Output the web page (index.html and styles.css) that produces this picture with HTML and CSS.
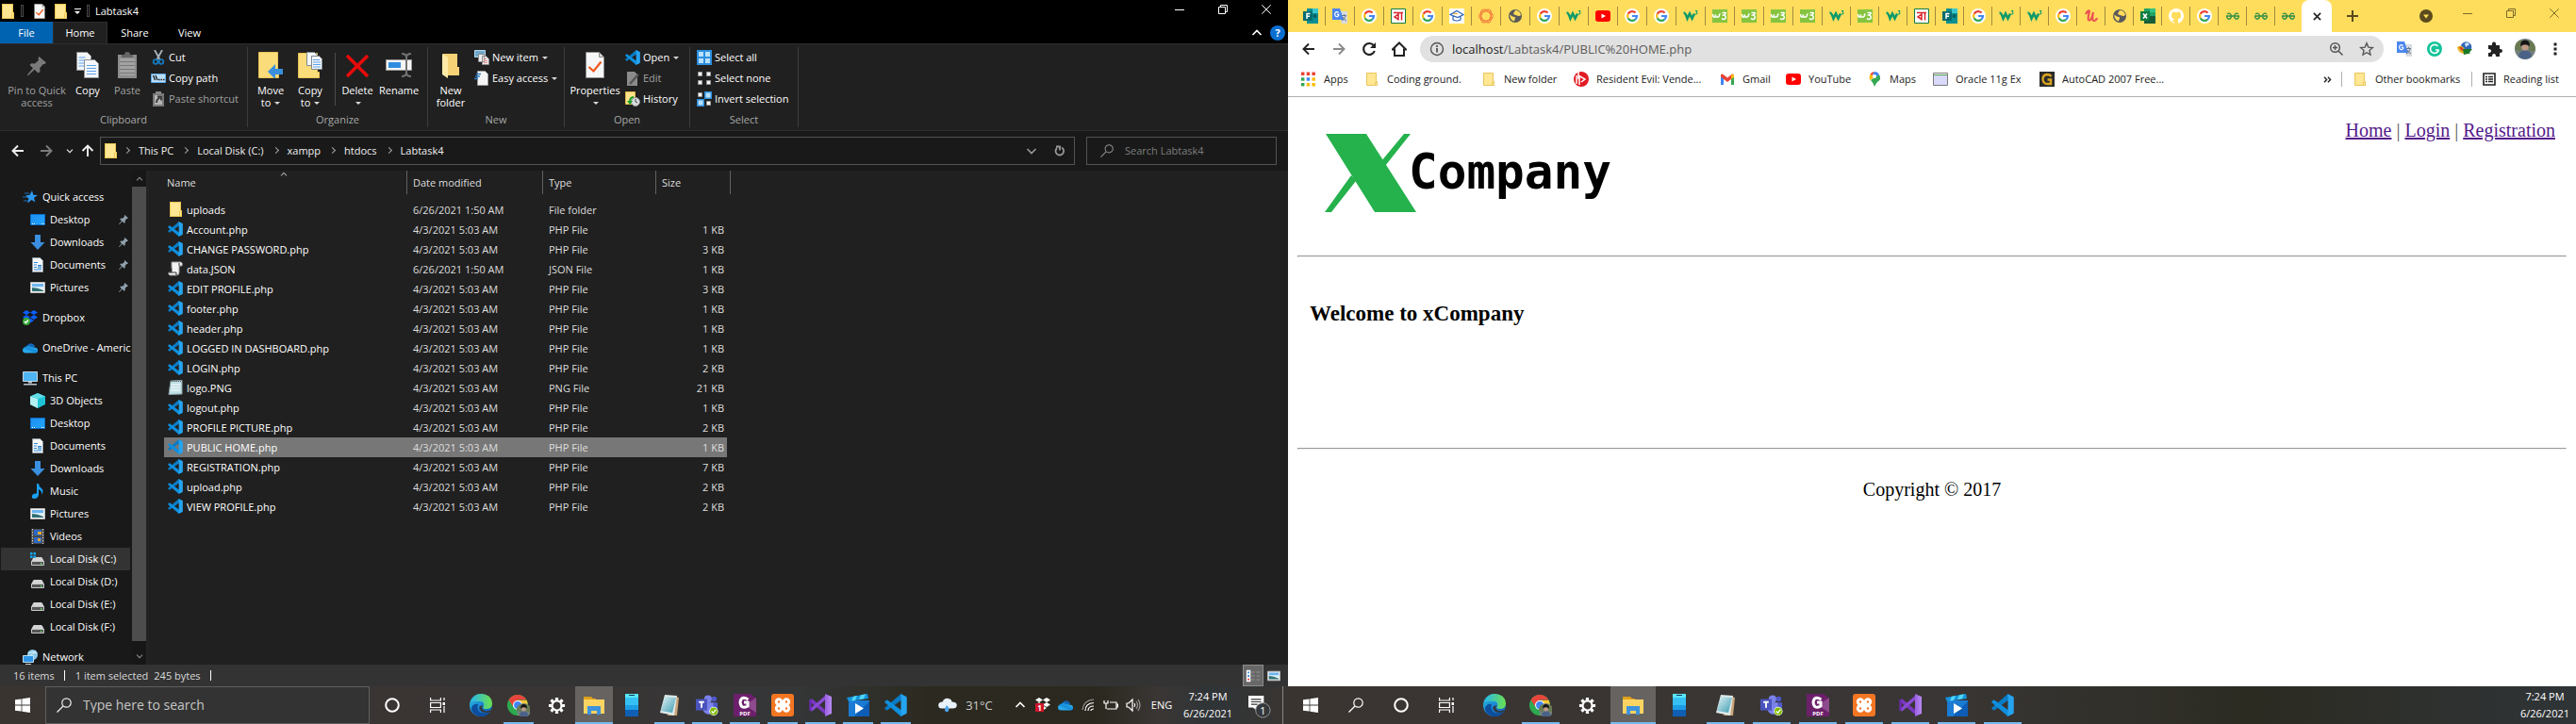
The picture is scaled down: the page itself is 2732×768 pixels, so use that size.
FILE: index.html
```html
<!DOCTYPE html>
<html lang="en">
<head>
<meta charset="utf-8">
<title>Labtask4</title>
<link rel="stylesheet" href="styles.css">
</head>
<body>
<svg class="sprite" aria-hidden="true">
  <defs>
    <linearGradient id="gEdge" x1="0" y1="0" x2="1" y2="1"><stop offset="0" stop-color="#2bc3d2"/><stop offset=".5" stop-color="#1b86d8"/><stop offset="1" stop-color="#0c4fa3"/></linearGradient>
    <linearGradient id="gEdge2" x1="0" y1="0" x2="1" y2="0"><stop offset="0" stop-color="#29b6f0"/><stop offset="1" stop-color="#6be04c"/></linearGradient>
    <linearGradient id="gVs" x1="0" y1="0" x2="1" y2="0"><stop offset="0" stop-color="#9b5fe0"/><stop offset="1" stop-color="#b98bf2"/></linearGradient>
    <linearGradient id="gPad" x1="0" y1="0" x2="1" y2="1"><stop offset="0" stop-color="#e3f2f5"/><stop offset="1" stop-color="#3a9db0"/></linearGradient>
    <linearGradient id="gScreen" x1="0" y1="0" x2="1" y2="1"><stop offset="0" stop-color="#1d8ff0"/><stop offset="1" stop-color="#23a5ff"/></linearGradient>
  </defs>
  <symbol id="folder" viewBox="0 0 16 16"><path fill="#ffe793" d="M2 0h12v9h1v7H2z"/><path fill="none" stroke="#eec54f" d="M2.500 .5h11v9h1v6h-12zM12.500 15V10"/></symbol>
  <symbol id="folderl" viewBox="0 0 16 16"><path fill="#ffe793" stroke="#e8c65b" d="M2.500 1.500h10v9h1v4h-11z"/><path fill="#fff3c0" stroke="#e8c65b" d="M11.500 14.500v-3h2v3z"/></symbol>
  <symbol id="propdoc" viewBox="0 0 20 28"><path fill="#f6f7f8" stroke="#8c8c8c" d="M.5.5h14l5 5v22H.5z"/><path fill="#d9dadb" stroke="#8c8c8c" d="M14.500 .5v5h5z"/><path fill="none" stroke="#f0571c" stroke-width="2.200" d="m3.500 16 5 4.500 8-10"/></symbol>
  <symbol id="code" viewBox="0 0 100 100"><path fill="#0a7bc4" d="M72 1 2 61q-3 3 0 5l6 6q3 2 6 0L96 12z"/><path fill="#0f8fdd" d="M72 99 2 39q-3-3 0-5l6-6q3-2 6 0l82 60z"/><path fill="#25a4f0" d="M73 1 96 12q3 2 3 5v66q0 3-3 5L73 99q-3 1-5-2 4 2 5-3V6q-1-5-5-3 2-3 5-2z"/></symbol>
  <symbol id="pin" viewBox="0 0 20 20"><path fill="currentColor" d="m12.500 0 7.500 6.500-2 1.700-1.300-.2-3.500 4.200.3 3.800-2 1.500-4-3.800L1 20l-1 .2.300-1.200 5.700-6.700L2.500 9 4.200 7.200 8 7.400l4-3.700-.5-2z"/></symbol>
  <symbol id="pages" viewBox="0 0 24 28"><path fill="#f4f6f8" stroke="#8b8f93" d="M.5.5h11l4 4v15H.5z"/><path stroke="#5ea2ee" d="M2.500 6h7M2.500 9h7M2.500 12h7M2.500 15h7"/><path fill="#f4f6f8" stroke="#8b8f93" d="M8.500 8.500h11l4 4v15h-15z"/><path stroke="#5ea2ee" d="M11 14.500h10M11 17.500h10M11 20.500h10M11 23.500h10"/></symbol>
  <symbol id="paste" viewBox="0 0 22 28"><path fill="#8c8c8c" d="M1 3h20v25H1z"/><path fill="#a2a2a2" d="M3 7h16v18H3z"/><path fill="#666" d="M5 6V3h3q0-3 3-3t3 3h3v3z"/><path stroke="#777" d="M3 10.500h16M3 14.500h16M3 18.500h16M3 22.500h16"/></symbol>
  <symbol id="pastes" viewBox="0 0 16 16"><path fill="#777" d="M2 2h12v14H2z"/><path fill="#b5b5b5" d="M4 4h8v10H4z"/><path fill="#888" d="M5 0h6v3H5z"/><path fill="none" stroke="#333" stroke-width="1.800" d="M6 12q0-4 3.500-5M7 5.500h4v4"/></symbol>
  <symbol id="cut" viewBox="0 0 16 16"><path stroke="#a9b4bd" stroke-width="1.800" d="M4 0 9.500 10M12 0 6.500 10"/><g fill="none" stroke="#1877b8" stroke-width="1.800"><circle cx="5" cy="12.500" r="2.300"/><circle cx="11" cy="12.500" r="2.300"/></g></symbol>
  <symbol id="path" viewBox="0 0 16 16"><path fill="#b9def8" stroke="#5aa9e6" d="M.5 3.500h15v9H.5z"/><path stroke="#1c1c1c" stroke-width="1.300" d="m2.500 5 2 5M5 5l2 5M8 9.500h1.500M10.500 9.500H12M13 9.500h1.500"/></symbol>
  <symbol id="moveto" viewBox="0 0 26 28"><path fill="#fbdc7b" stroke="#e9c257" d="M.5.5h20v22h1v5H.5z"/><path fill="#3a8fdd" d="m10 21 8-8v5h8v6h-8v5z"/></symbol>
  <symbol id="copyto" viewBox="0 0 26 28"><path fill="#fbdc7b" stroke="#e9c257" d="M.5 1.500h20v20h2v6H.5z"/><g fill="#f4f6f8" stroke="#7e8891"><path d="M9.500.5h8l3 3v11h-11z"/><path d="M14.500 4.500h8l3 3v11h-11z"/></g><path stroke="#5ea2ee" d="M16 8.500h7M16 11h8M16 13.500h8M16 16h8"/></symbol>
  <symbol id="del" viewBox="0 0 28 28"><path stroke="#e80b0b" stroke-width="3.600" d="m3 4 22 22M25 4 3 26"/></symbol>
  <symbol id="rename" viewBox="0 0 28 28"><path fill="#f5f5f5" stroke="#9a9a9a" d="M.5 8.500h27v11H.5z"/><path fill="#2f8de0" d="M3 11h13v6H3z"/><path fill="none" stroke="#727272" stroke-width="2" d="M17 2q5 0 5 4 0-4 5-4M22 6v16M17 26q5 0 5-4 0 4 5 4"/></symbol>
  <symbol id="newfolder" viewBox="0 0 20 28"><path fill="#f6d277" d="M2 2h15v14h2v9H2z"/><path fill="#ffeaa8" d="m1 2 6 4v22l-6-4z"/></symbol>
  <symbol id="newitem" viewBox="0 0 16 16"><path fill="#6fa7cc" stroke="#b6d9ee" d="M.5.5h11v7H.5z"/><path fill="#eee" stroke="#888" d="M4.500 4.500h6v8h-6zM8.500 6.500h4l3 3v6h-7z"/><path stroke="#d88" d="M10 9.500h3M10 11.500h4M10 13.500h4"/></symbol>
  <symbol id="easy" viewBox="0 0 16 16"><path fill="#f5f5f5" stroke="#999" d="M3.500.5h8l3 3v12h-11z"/><path stroke="#2b7bc4" stroke-width="1.300" d="M2 3.500h5M1 6h5M0 8.500h4"/></symbol>
  <symbol id="edit" viewBox="0 0 16 16"><path fill="#8b8b8b" d="M2 1h8l3 3v12H2z"/><path stroke="#555" stroke-width="2.500" d="m5 14 9-10"/></symbol>
  <symbol id="hist" viewBox="0 0 16 16"><path fill="#ffe28a" stroke="#e1b74a" d="M.5.5h10v13H.5z"/><circle cx="11" cy="11" r="4.500" fill="#d9dde0" stroke="#8a8a8a"/><path fill="none" stroke="#444" d="M11 8v3l2 1"/><path fill="none" stroke="#17a02b" stroke-width="2" d="M9 6q-4 0-4 5"/><path fill="#17a02b" d="M2 10h6l-3 4z"/></symbol>
  <symbol id="selall" viewBox="0 0 16 16"><path fill="#2b8fe0" d="M0 0h16v16H0z"/><path fill="#b9e0fa" d="M2 2h5v5H2zM9 2h5v5H9zM2 9h5v5H2zM9 9h5v5H9z"/></symbol>
  <symbol id="selnone" viewBox="0 0 16 16"><g fill="#f5f5f5" stroke="#999"><path d="M1.500 1.500h4v4h-4zM10.500 1.500h4v4h-4zM1.500 10.500h4v4h-4zM10.500 10.500h4v4h-4z"/></g></symbol>
  <symbol id="selinv" viewBox="0 0 16 16"><path fill="#b9e0fa" stroke="#2b8fe0" stroke-width="1.500" d="M8.800.8h6.500v6.500H8.800zM.8 8.800h6.500v6.500H.8z"/><path fill="#f5f5f5" stroke="#999" d="M1.500 1.500h4v4h-4zM10.500 10.500h4v4h-4z"/></symbol>
  <symbol id="star" viewBox="0 0 16 16"><path fill="#2b9af0" d="m10 1 1.300 4.700 4.700.3-4 2.700 1.300 4.900L9.500 11l-4.300 3.500 1.300-4.700L3 6.500l4.600-.8z"/><path stroke="#1f6fb8" d="M2 4h5M0 8h5M1 12h5"/></symbol>
  <symbol id="desk" viewBox="0 0 16 16"><path fill="url(#gScreen)" stroke="#0b6fc8" d="M.5 2.500h15v11H.5z"/><path stroke="#fff" stroke-dasharray="1 1" d="M2 12.500h3M12 12.500h3"/></symbol>
  <symbol id="down" viewBox="0 0 16 16"><path fill="#3a8fe0" d="M5 0h6v8h4.500L8 16 .5 8H5z"/></symbol>
  <symbol id="doc" viewBox="0 0 16 16"><path fill="#f5f7f9" stroke="#8f979e" d="M2.500.5h8l3 3v12h-11z"/><path stroke="#2b88d8" d="M4 5.500h4M4 8h3M4 10.500h3M4 13h8M8 8.500h4"/><path fill="#7fb4dc" d="M8 9h4v3H8z"/></symbol>
  <symbol id="pic" viewBox="0 0 16 16"><path fill="#f2f2f2" stroke="#b9b9b9" d="M.5 2.500h15v11H.5z"/><path fill="#6db4ee" d="M2 4h12v4H2z"/><path fill="#d7edf7" d="M2 7h12v2H2z"/><path fill="#2f6f73" d="M2 8q5 0 12 3v1H2z"/></symbol>
  <symbol id="dbox" viewBox="0 0 16 16"><path fill="currentColor" d="m4 0 4 2.500L4 5 0 2.500zM12 0l4 2.500L12 5 8 2.500zM4 5l4 2.500L4 10 0 7.500zM12 5l4 2.500-4 2.500-4-2.500zM8 8.500l4 2.500-4 2.500L4 11z"/></symbol>
  <symbol id="dboxok" viewBox="0 0 16 16"><use href="#dbox" color="#0b5fff"/><circle cx="4" cy="12" r="4" fill="#3aa83a"/><path fill="none" stroke="#fff" stroke-width="1.400" d="m2 12 1.500 1.500L6 10.500"/></symbol>
  <symbol id="cloud" viewBox="0 0 16 16"><path fill="#1267b8" d="M5 5q2.500-3 6-1 2 1 2 3L4 9z"/><path fill="#28a8ea" d="M3.500 13.500q-3.500 0-3.500-3T3.500 7q2-2 5 0l3.500.5q4 0 4 3t-3 3z"/><path fill="#0f83d6" d="M1 8.500Q2 5.500 5 6q2 0 3.500 1.500L16 11q0 2.500-3 2.500z" opacity=".6"/></symbol>
  <symbol id="pc" viewBox="0 0 16 16"><path fill="#4fb4f2" stroke="#c6d4de" d="M.5 1.500h15v10H.5z"/><path fill="#b9c4cc" d="M6 12h4v1.500H6zM1 14h14v1.500H1z"/></symbol>
  <symbol id="cube" viewBox="0 0 16 16"><path fill="#1fc3d6" d="m8 0 8 3.500V12l-8 4-8-4V3.500z"/><path fill="#b4eff2" d="M0 3.500 8 6v10l-8-4z"/><path fill="#63dce6" d="m8 0 8 3.500L8 6 0 3.500z"/></symbol>
  <symbol id="note" viewBox="0 0 16 16"><path fill="#19a0f5" d="M7 0h2q0 3 3 5t0 7q1-4-3-6v6q-1 4-4.500 4T2 13q.5-3 5-2.500z"/></symbol>
  <symbol id="film" viewBox="0 0 16 16"><path fill="#4a4a4a" d="M1 0h14v16H1z"/><path stroke="#d0d0d0" stroke-dasharray="1.500 1.500" d="M2.500 0v16M13.500 0v16"/><path fill="#2a69c8" d="M4 1h8v6H4zM4 9h8v6H4z"/><path fill="#e6a52a" d="M8 3h4v3H8zM8 10h3v3H8z"/></symbol>
  <symbol id="disk" viewBox="0 0 16 16"><path fill="#d4d4d4" d="m3 7 1-1h8l1 1 2 4H1z"/><path fill="#555" stroke="#c9c9c9" d="M1.500 10.500h13v4h-13z"/><path fill="#5de05d" d="M11 12h1.500v1.500H11z"/></symbol>
  <symbol id="diskc" viewBox="0 0 16 16"><use href="#disk"/><path fill="#17a6f0" d="M0 1h2.500v2.500H0zM3.500 1H6v2.500H3.500zM0 4.500h2.500V7H0zM3.500 4.500H6V7H3.500z"/></symbol>
  <symbol id="net" viewBox="0 0 16 16"><circle cx="10.500" cy="5.500" r="5.500" fill="#8cc9e8"/><path fill="none" stroke="#e2f4fb" d="M6 4q5-3 9 0M7 8q4-4 7-7"/><path fill="#2f95e6" stroke="#bcdff5" d="M.5 6.500h11v7H.5z"/><path fill="#c5cdd3" d="M3 15h6v1H3z"/></symbol>
  <symbol id="json" viewBox="0 0 16 16"><path fill="#f2f2f2" stroke="#9a9a9a" d="M4 1h10q2 1 1 4h-3v7q0 3-3 3H2q-2-1-1-3h3q1-1 0-6z"/><path fill="none" stroke="#333" d="M12 5V2M1.500 12H9v3"/></symbol>
  <symbol id="png" viewBox="0 0 16 16"><path fill="#bfe0e6" stroke="#88a0a6" d="m3 1 12-.5V15l-14 .5z"/><path stroke="#fff" d="M3.500 5h10M3 8h10M3 11h10"/><path stroke="#555" stroke-dasharray="1 1" d="M3 1.500h12"/></symbol>
  <symbol id="win" viewBox="0 0 16 16"><path fill="#fff" d="m0 2.300 6.600-.9v6.200H0zM7.400 1.300 16 0v7.600H7.400zM0 8.400h6.600v6.200L0 13.700zM7.400 8.400H16V16l-8.600-1.300z"/></symbol>
  <symbol id="mag" viewBox="0 0 16 16"><g fill="none" stroke="currentColor" stroke-width="1.200"><circle cx="10.500" cy="5.500" r="4.700"/><path d="M7 9 .5 15.500"/></g></symbol>
  <symbol id="ring" viewBox="0 0 16 16"><circle cx="8" cy="8" r="6.800" fill="none" stroke="#fff" stroke-width="2"/></symbol>
  <symbol id="tview" viewBox="0 0 16 16"><g fill="none" stroke="#fff" stroke-width="1.200"><path d="M.6 0v3h10.800V0M.6 16v-3h10.800v3M.6 5.500h10.800v5H.6zM15 0v3M15 9v7"/></g><path fill="#fff" d="M13.500 5h3v3h-3z"/></symbol>
  <symbol id="edge" viewBox="0 0 24 24"><circle cx="12" cy="12" r="12" fill="url(#gEdge)"/><path fill="url(#gEdge2)" d="M1 9Q4 0 12 0q11 0 12 10 0 6-6 6-5 0-3-3 1-5-4-5Q5 7 1 9z"/><path fill="#0d4d9c" d="M9 11q-2 6 3 9 5 2 10-1-5 6-12 5-8-3-8-9 2-5 7-4z"/><path fill="#35383c" d="M15 12q-4 3 1 6 3 1 7-1l-1 2q-5 2-9 0-4-3-2-6z"/></symbol>
  <symbol id="face" viewBox="0 0 16 16"><circle cx="8" cy="8" r="8" fill="#74807e"/><path fill="#6a7a52" d="M0 8Q0 2 5 1v9zM11 1q5 2 5 8l-5 1z"/><path fill="#4a6288" d="M3 14q0-5 5-5t5 5q-5 4-10 0z"/><circle cx="8" cy="6.500" r="2.600" fill="#c09a85"/><path fill="#151515" d="M4.500 6Q4 1 8 1t3.500 5q-3.500-3-7 0z"/></symbol>
  <symbol id="chrome" viewBox="0 0 24 24"><circle cx="11" cy="12" r="11" fill="#2da94f"/><path fill="#e8453c" d="M1.500 6.500Q5 1 11 1t9.500 5.500H11L6 13z"/><path fill="#fcc934" d="M11 7h9.800q3 8-3.800 14l-6 2 5-8z"/><circle cx="11" cy="12" r="5" fill="#fff"/><circle cx="11" cy="12" r="3.900" fill="#4285f4"/><use href="#face" x="10" y="10" width="15" height="15"/></symbol>
  <symbol id="gear" viewBox="0 0 20 20"><circle cx="10" cy="10" r="5.300" fill="none" stroke="#fff" stroke-width="2.400"/><g stroke="#fff" stroke-width="3.400"><path d="M10 1v3M10 16v3M1 10h3M16 10h3M3.600 3.600l2.100 2.100M14.300 14.300l2.100 2.100M16.400 3.600l-2.100 2.100M5.700 14.300l-2.100 2.100"/></g></symbol>
  <symbol id="explorer" viewBox="0 0 24 24"><path fill="#e0a21b" d="M1 3h8l2 2h3v3H1z"/><path fill="#fcd462" d="M1 6h22v15H1z"/><path fill="#3f93dc" d="M5 22v-9h14v9h-4v-4H9v4z"/></symbol>
  <symbol id="phone" viewBox="0 0 24 24"><path fill="#35c1f3" d="M5 0h14v24H5z"/><path fill="#0f5fb5" d="M5 17h14v7H5z"/><path fill="#1d9de5" d="M5 12h14v5H5z"/><path fill="#59e5f7" d="M5 0h14v4H5z"/><path stroke="#143a5a" d="M9 1.500h6"/></symbol>
  <symbol id="notepad" viewBox="0 0 24 24"><path fill="#c9a679" d="m18 3 4 1-2 19H10z"/><path fill="#dfe9eb" d="m7 1 13 1-3 21-15-3z"/><path fill="url(#gPad)" d="m7 3 12 1-4 16-12-2z"/></symbol>
  <symbol id="teams" viewBox="0 0 26 24"><circle cx="14" cy="5" r="4.500" fill="#7b83eb"/><circle cx="21" cy="5" r="3" fill="#5059c9"/><path fill="#5059c9" d="M17 9h8v7q-1 5-8 4z"/><path fill="#7b83eb" d="M8 9h12v9q-3 6-8 4-4-2-4-7z"/><path fill="#4b53bc" d="M0 5h13v13H0z"/><path stroke="#fff" stroke-width="2" d="M3.500 8.500h6M6.500 8v7"/><circle cx="20.500" cy="19" r="5" fill="#fff"/><circle cx="20.500" cy="19" r="4.200" fill="#7fba00"/><path fill="none" stroke="#fff" stroke-width="1.500" d="m18 19 2 2 3-4"/></symbol>
  <symbol id="foxit" viewBox="0 0 24 24"><path fill="#6c1f6b" d="M0 0h18l6 5v19H0z"/><path fill="#8d4a8c" d="m12 12 12-8v16z"/><path fill="none" stroke="#fff" stroke-width="3" d="M15.500 6Q8 1.500 7 9q1 8 8 4V9h-4"/><text x="12" y="23" fill="#fff" font-family="Open Sans,sans-serif" font-size="6" font-weight="700" text-anchor="middle">PDF</text></symbol>
  <symbol id="xampp" viewBox="0 0 24 24"><rect width="24" height="24" rx="3" fill="#f37623"/><g fill="none" stroke="#fff" stroke-width="3"><path d="M12 8.500v7M9 12h6"/><circle cx="8" cy="8.500" r="2.700"/><circle cx="16" cy="8.500" r="2.700"/><circle cx="8" cy="15.500" r="2.700"/><circle cx="16" cy="15.500" r="2.700"/></g></symbol>
  <symbol id="vs" viewBox="0 0 24 24"><path fill="none" stroke="#7a38c2" stroke-width="3.600" d="m1.800 6.500 16 13.500"/><path fill="none" stroke="#8a4bd3" stroke-width="3.600" d="M1.800 17.500 18 3.500"/><path stroke="#6a2bb0" stroke-width="2.500" d="M1.500 6v12"/><path fill="url(#gVs)" d="m17 0 7 3v18l-7 3z"/></symbol>
  <symbol id="movies" viewBox="0 0 24 24"><path fill="#1a7bd4" d="M2 7h22v17H2z"/><path fill="#0d5cb5" d="m24 8v16H8z"/><path fill="#1494dd" d="m0 4 22-4 1 5L2 8z"/><path fill="#4fd6f7" d="m7 2.800 4-.8-2 5-4 .4zM15 1.300l5-1-2 5-5 1z"/><path fill="#fff" d="m9 10 9 5.500L9 21z"/></symbol>
  <symbol id="rain" viewBox="0 0 22 18"><path fill="#e9f2fa" d="M4 13q-4 0-4-4t5-4q2-5 7-4 4 1 4 4 6 0 6 4t-5 4z"/><path fill="#4aa6ee" d="M10 9q4 4 2 7-2 2-4 0-1-3 2-7z"/></symbol>
  <symbol id="wifi" viewBox="0 0 14 14"><g fill="none" stroke="#fff" stroke-width="1.200"><path d="M1 12Q2 2 13 1" opacity=".55"/><path d="M4 13Q4 5 13 4.500M7 13q0-5 6-5M10 13q0-2 3-2"/></g></symbol>
  <symbol id="batt" viewBox="0 0 16 12"><path fill="none" stroke="#fff" stroke-width="1.200" d="M7 3h7v7H4M14 5h1.500v3H14M1 1v3h4V1M3 4v6"/></symbol>
  <symbol id="sound" viewBox="0 0 16 14"><path fill="none" stroke="#fff" stroke-width="1.200" d="M1 5h2l4-4v12L3 9H1zM9 5q1.500 2 0 4"/><path fill="none" stroke="#999" stroke-width="1.200" d="M11 3q3 4 0 8M13 1q4 6 0 12"/></symbol>
  <symbol id="notif" viewBox="0 0 26 26"><path fill="#fff" d="M0 0h17v13h-8v3l-4-3H0z"/><path stroke="#333" stroke-width="1.200" d="M3 4h11M3 6.800h11M3 9.500h7"/><circle cx="16" cy="16" r="8" fill="#34383b" stroke="#999"/><text x="16" y="20.500" fill="#fff" font-family="Open Sans,sans-serif" font-size="12" text-anchor="middle">1</text></symbol>
  <symbol id="chev" viewBox="0 0 12 12"><path fill="none" stroke="currentColor" stroke-width="1.600" d="m1.500 4 4.500 4.500L10.500 4"/></symbol>
  <symbol id="arrow" viewBox="0 0 14 14"><path fill="none" stroke="currentColor" stroke-width="1.900" d="M13 7H1.500M7 1.500 1.500 7 7 12.500"/></symbol>
  <symbol id="close" viewBox="0 0 10 10"><path stroke="currentColor" d="m.3.3 9.400 9.400M9.700.3.300 9.700"/></symbol>
  <symbol id="restore" viewBox="0 0 10 10"><path fill="none" stroke="currentColor" d="M.5 2.500h7v7h-7zM2.500 2V.5h7v7H8"/></symbol>
  <symbol id="min" viewBox="0 0 10 10"><path stroke="currentColor" d="M0 5.500h10"/></symbol>
  <symbol id="refresh" viewBox="0 0 12 12"><path fill="none" stroke="currentColor" stroke-width="1.800" d="M3 3a4.300 4.300 0 1 0 5-.5M2 1.500h4v4"/></symbol>
  <symbol id="forms" viewBox="0 0 16 16"><path fill="#0a8f93" d="M4 0h12v16H4z"/><path fill="#38c6cb" d="M10 0h6v5h-6zM4 5h6v5H4z"/><circle cx="12.500" cy="8" r="2" fill="#065e60"/><path fill="#036c70" d="M0 3h10v10H0z"/><path stroke="#fff" stroke-width="1.500" fill="none" d="M4 11V5.500h3.500M4 8.200h3"/></symbol>
  <symbol id="trans" viewBox="0 0 16 16"><path fill="#d8dbe0" d="M6 3h10v13h-6z"/><path fill="#4a86ee" d="M0 0h8l4 12H0z"/><path fill="none" stroke="#fff" stroke-width="1.200" d="M6.500 4.500Q5 3 3.300 4.200 1.800 6 3.300 8q2 1.500 3.400-.5V6.300H5"/><path fill="none" stroke="#66788c" d="M10 7.500h5M12.500 6v1.500M14 8q-1 4-4 5M11 9q1 3 4 4"/></symbol>
  <symbol id="goog" viewBox="0 0 16 16"><circle cx="8" cy="8" r="8" fill="#fff"/><g fill="none" stroke-width="2.200"><path stroke="#ea4335" d="M11.600 4.600A5 5 0 0 0 3.600 5.700"/><path stroke="#fbbc05" d="M3.600 5.700a5 5 0 0 0 0 4.600"/><path stroke="#34a853" d="M3.600 10.300a5 5 0 0 0 7.700 1.400"/><path stroke="#4285f4" d="M11.300 11.700A5 5 0 0 0 13 8H8"/></g></symbol>
  <symbol id="bangla" viewBox="0 0 16 16"><path fill="#fff" stroke="#0f7a45" d="M.5.5h15v15H.5z"/><path fill="none" stroke="#d8232a" stroke-width="1.500" d="M3 4.500h10M8 4.500v8M8 11.500 4 9l4-3M11.500 4.500v8"/></symbol>
  <symbol id="cap" viewBox="0 0 16 16"><path fill="#fff" d="M0 0h16v16H0z"/><path fill="none" stroke="#2a63b8" stroke-width="1.200" d="m1 6.500 7-4 7 4-6 3zM4 8v4q4 2 8 0V8"/><path stroke="#e6a93a" stroke-width="1.200" d="M4 5.500h5"/></symbol>
  <symbol id="flower" viewBox="0 0 16 16"><g fill="none" stroke="#f0793c"><ellipse cx="8" cy="8" rx="7.500" ry="5"/><ellipse cx="8" cy="8" rx="7.500" ry="5" transform="rotate(60 8 8)"/><ellipse cx="8" cy="8" rx="7.500" ry="5" transform="rotate(120 8 8)"/></g></symbol>
  <symbol id="globe" viewBox="0 0 16 16"><circle cx="8" cy="8" r="7" fill="#5a5a5a"/><path fill="#ffdd5c" d="M2 7q2 0 3 1.500 3 0 3 1.500l-1 3.500q-4-1-5-6.500zM8 2q5 0 6 5-2 1.500-4 .5L7 6.500l-1-1z"/></symbol>
  <symbol id="w3" viewBox="0 0 16 16"><path fill="none" stroke="#0b9a6b" stroke-width="2.600" d="M.5 4.500q2 0 4 6L7 5.500l2.500 5 2.500-5"/><path fill="none" stroke="#0b9a6b" d="M13 2.500h2l-1 1.500q2 .3.500 2L13 6"/></symbol>
  <symbol id="w3g" viewBox="0 0 16 16"><path fill="#86c440" d="M0 1h16v14H0z"/><path fill="none" stroke="#fff" stroke-width="1.500" d="M.7 6v2q1 2 2.300 1L3.500 6.500V8q1 2 2.500 1 1.500-.5 1.500-2.500L8.500 5.500M10.500 4.500H14q1 1-2 2.500 3 .5 2 3.500-2 2-4 0"/></symbol>
  <symbol id="yt" viewBox="0 0 16 16"><rect y="2" width="16" height="12" rx="3" fill="#f00"/><path fill="#fff" d="m6.500 5.500 4.500 2.500-4.500 2.500z"/></symbol>
  <symbol id="udemy" viewBox="0 0 16 16"><path fill="none" stroke="#ec5252" stroke-width="2.200" d="M2 6q3-5 4-3-2 8-1 9 3 2 5-8-2 9 1 9 2 0 3-3"/></symbol>
  <symbol id="excel" viewBox="0 0 16 16"><path fill="#21a366" d="M4 0h12v16H4z"/><path fill="#33c481" d="M10 0h6v4h-6z"/><path fill="#185c37" d="M10 8h6v8H4v-4h6z"/><path fill="#107c41" d="M0 3h10v10H0z"/><path stroke="#fff" stroke-width="1.600" d="m3 5.500 4 5M7 5.500l-4 5"/></symbol>
  <symbol id="github" viewBox="0 0 16 16"><circle cx="8" cy="8" r="8" fill="#fff"/><path fill="#ffdd5c" d="m4 3 2 1h4l2-1 .5 2.500Q14 9 11.500 10.500l-1.500.5V16H6v-2q-2 1-3-1 2 .5 3-2l-1.500-.5Q2 9 3.500 5.500z"/></symbol>
  <symbol id="gfg" viewBox="0 0 16 16"><path fill="none" stroke="#2f8d46" stroke-width="1.300" d="M1 8h14M2 6q2.500-2 4 .5t-1 4.500H3q-1.500-1-1.500-3M14 6q-2.500-2-4 .5t1 4.500H13q1.500-1 1.500-3"/></symbol>
  <symbol id="apps" viewBox="0 0 14 14"><g stroke-width="3" stroke-dasharray="3 2"><path stroke="#ea4335" d="M0 2h13"/><path stroke="#34a853" d="M0 7h3"/><path stroke="#4285f4" d="M5 7h3"/><path stroke="#fbbc05" d="M10 7h3"/><path stroke="#34a853" d="M0 12h3"/><path stroke="#fbbc05" d="M5 12h8"/></g></symbol>
  <symbol id="bbc" viewBox="0 0 16 16"><circle cx="8" cy="8" r="8" fill="#e21b23"/><path fill="none" stroke="#fff" stroke-width="1.500" d="M5 0v8M6 14V4.500l6 3.500-4 3M3 4v9"/></symbol>
  <symbol id="gmail" viewBox="0 0 16 16"><path fill="#4285f4" d="M1 4h3v10H1z"/><path fill="#34a853" d="M12 4h3v10h-3z"/><path fill="#ea4335" d="m1 3 2-.5L8 6.500l5-4 2 .5v2.500L8 11 1 5.500z"/><path fill="#fbbc05" d="m12 3.500 3-.5v3l-3 2z"/></symbol>
  <symbol id="maps" viewBox="0 0 16 16"><path fill="#34a853" d="M8 16q-1-4-4-7l9-6q3 5-2 8-2 2-3 5z"/><path fill="#ea4335" d="M3.500 2.500Q5 0 8 0L5 5z"/><path fill="#4285f4" d="M8 0q3.500 0 5 3L9 6 6 3z"/><path fill="#fbbc05" d="M3 9q-1-3 .5-6.500L8 6z"/><circle cx="8" cy="5" r="2" fill="#fff"/></symbol>
  <symbol id="oracle" viewBox="0 0 16 16"><path fill="#d9d9fb" stroke="#7b7b7b" d="M.5 1.500h15v13H.5z"/><path fill="#fff" d="M1 2h14v2H1z"/><path stroke="#4b9c4b" d="M1 3.500h14"/></symbol>
  <symbol id="gold" viewBox="0 0 16 16"><path fill="#2b2b2b" d="M0 0h16v16H0z"/><path fill="none" stroke="#d9a520" stroke-width="2.400" d="M12.500 5Q11 3 8 3 3.500 3.500 3.500 8q.5 5 5 5h3.500V8.500H8.500"/></symbol>
  <symbol id="read" viewBox="0 0 14 14"><path fill="none" stroke="#222" stroke-width="1.600" d="M1 1h12v12H1z"/><path stroke="#222" stroke-width="1.500" d="M3 4.500h2M6 4.500h5M3 7h2M6 7h5M3 9.500h2M6 9.500h5"/></symbol>
  <symbol id="reload" viewBox="0 0 16 16"><path fill="none" stroke="#222" stroke-width="2.200" d="M13 4.500A6 6 0 1 0 13.800 10"/><path fill="#222" d="M15 1v6H9z"/></symbol>
  <symbol id="home" viewBox="0 0 16 16"><path fill="none" stroke="#222" stroke-width="2" d="M.8 8.500 8 1.500l7.200 7H13V15H3V8.500z"/></symbol>
  <symbol id="info" viewBox="0 0 16 16"><circle cx="8" cy="8" r="6.500" fill="none" stroke="#555" stroke-width="1.400"/><path stroke="#555" stroke-width="1.800" d="M8 7v4.500M8 4v2"/></symbol>
  <symbol id="zoomin" viewBox="0 0 16 16"><g fill="none" stroke="#555" stroke-width="1.500"><circle cx="6.500" cy="6.500" r="4.800"/><path d="m10 10 4.500 4.500M4 6.500h5M6.500 4v5"/></g></symbol>
  <symbol id="fav" viewBox="0 0 16 16"><path fill="none" stroke="#555" stroke-width="1.400" d="m8 1.800 1.800 4.300 4.700.4-3.500 3.100 1 4.500-4-2.400-4 2.400 1-4.500L1.500 6.500l4.700-.4z"/></symbol>
  <symbol id="gram" viewBox="0 0 16 16"><circle cx="8" cy="8" r="8" fill="#15c39a"/><path fill="none" stroke="#fff" stroke-width="1.600" d="M11.500 5A4.500 4.500 0 1 0 12 10V9H9"/></symbol>
  <symbol id="idm" viewBox="0 0 16 16"><circle cx="9.500" cy="6" r="5.800" fill="#3167b8"/><path fill="#cfe2f5" d="M8 2q4-2 5 1l-4 3z"/><path fill="#e8b320" d="M0 6q5-4 9 4l-2 3Q1 12 0 6z"/><path fill="#d13a2a" d="M2 6q3-1 5 3l-2 1z"/><path fill="#1a7a24" d="m6 8 10 0-3 3.500 1 1-7 1.500z"/></symbol>
  <symbol id="puzzle" viewBox="0 0 16 16"><path fill="#222" d="M1 4h4q-.5-3.500 2-3.500T9 4h4v4q3-.5 3 2t-3 2v4H9q0-3-2-3t-2 3H1v-4q3 0 3-2t-3-2z"/></symbol>
</svg>

<main class="screen">
  <section class="explorer">
    <div class="app dark">
      <header class="titlebar">
        <svg class="i16"><use href="#folder"/></svg><i class="qsep"></i>
        <svg class="i16"><use href="#propdoc"/></svg><svg class="i16"><use href="#folder"/></svg>
        <span class="qmore"></span><i class="qsep"></i>
        <h1>Labtask4</h1>
        <div class="winbtns">
          <button aria-label="Minimize"><svg><use href="#min"/></svg></button>
          <button aria-label="Restore"><svg><use href="#restore"/></svg></button>
          <button aria-label="Close"><svg><use href="#close"/></svg></button>
        </div>
      </header>
      <nav class="tabs">
        <button class="file">File</button><button class="on">Home</button><button>Share</button><button>View</button>
        <span class="tabend"><svg class="i12 flip"><use href="#chev"/></svg><button class="help" aria-label="Help">?</button></span>
      </nav>
      <div class="ribbon">
        <div class="group clip">
          <div class="tools">
            <button class="big w66 off"><svg class="pinbig"><use href="#pin"/></svg>Pin to Quick<br>access</button>
            <button class="big w42"><svg><use href="#pages"/></svg>Copy</button>
            <button class="big w42 off"><svg><use href="#paste"/></svg>Paste</button>
            <div class="small">
              <button><svg><use href="#cut"/></svg>Cut</button>
              <button><svg><use href="#path"/></svg>Copy path</button>
              <button class="off"><svg><use href="#pastes"/></svg>Paste shortcut</button>
            </div>
          </div>
          <p>Clipboard</p>
        </div>
        <div class="group org">
          <div class="tools">
            <button class="big w42"><svg><use href="#moveto"/></svg>Move<br>to <i class="tri"></i></button>
            <button class="big w42"><svg><use href="#copyto"/></svg>Copy<br>to <i class="tri"></i></button>
            <i class="vline"></i>
            <button class="big w46"><svg><use href="#del"/></svg>Delete<br><i class="tri"></i></button>
            <button class="big w42"><svg><use href="#rename"/></svg>Rename</button>
          </div>
          <p>Organize</p>
        </div>
        <div class="group new">
          <div class="tools">
            <button class="big w42"><svg><use href="#newfolder"/></svg>New<br>folder</button>
            <div class="small">
              <button><svg><use href="#newitem"/></svg>New item <i class="tri"></i></button>
              <button><svg><use href="#easy"/></svg>Easy access <i class="tri"></i></button>
            </div>
          </div>
          <p>New</p>
        </div>
        <div class="group open">
          <div class="tools">
            <button class="big w56"><svg><use href="#propdoc"/></svg>Properties<br><i class="tri"></i></button>
            <div class="small">
              <button><svg><use href="#code"/></svg>Open <i class="tri"></i></button>
              <button class="off"><svg><use href="#edit"/></svg>Edit</button>
              <button><svg><use href="#hist"/></svg>History</button>
            </div>
          </div>
          <p>Open</p>
        </div>
        <div class="group sel">
          <div class="tools">
            <div class="small">
              <button><svg><use href="#selall"/></svg>Select all</button>
              <button><svg><use href="#selnone"/></svg>Select none</button>
              <button><svg><use href="#selinv"/></svg>Invert selection</button>
            </div>
          </div>
          <p>Select</p>
        </div>
      </div>
      <div class="addr">
        <div class="navbtns">
          <button aria-label="Back"><svg class="i14"><use href="#arrow"/></svg></button>
          <button class="dim" aria-label="Forward"><svg class="i14 mirror"><use href="#arrow"/></svg></button>
          <button class="narrow" aria-label="Recent"><svg class="i8"><use href="#chev"/></svg></button>
          <button class="narrow" aria-label="Up"><svg class="i14 turn"><use href="#arrow"/></svg></button>
        </div>
        <div class="crumbs">
          <svg class="i16"><use href="#folder"/></svg>
          <i class="gt"></i><a href="#">This PC</a><i class="gt"></i><a href="#">Local Disk (C:)</a><i class="gt"></i><a href="#">xampp</a><i class="gt"></i><a href="#">htdocs</a><i class="gt"></i><a href="#">Labtask4</a>
          <span class="crumbend"><svg class="i12"><use href="#chev"/></svg><svg class="i12"><use href="#refresh"/></svg></span>
        </div>
        <label class="find"><svg class="i14"><use href="#mag"/></svg><input type="text" aria-label="Search Labtask4" placeholder="Search Labtask4"></label>
      </div>
      <div class="body">
        <nav class="tree">
          <a href="#"><svg><use href="#star"/></svg>Quick access</a>
          <a class="sub" href="#"><svg><use href="#desk"/></svg>Desktop<svg class="pinned"><use href="#pin"/></svg></a>
          <a class="sub" href="#"><svg><use href="#down"/></svg>Downloads<svg class="pinned"><use href="#pin"/></svg></a>
          <a class="sub" href="#"><svg><use href="#doc"/></svg>Documents<svg class="pinned"><use href="#pin"/></svg></a>
          <a class="sub" href="#"><svg><use href="#pic"/></svg>Pictures<svg class="pinned"><use href="#pin"/></svg></a>
          <a class="root" href="#"><svg><use href="#dboxok"/></svg>Dropbox</a>
          <a class="root" href="#"><svg><use href="#cloud"/></svg>OneDrive - Americ</a>
          <a class="root" href="#"><svg><use href="#pc"/></svg>This PC</a>
          <a class="sub" href="#"><svg><use href="#cube"/></svg>3D Objects</a>
          <a class="sub" href="#"><svg><use href="#desk"/></svg>Desktop</a>
          <a class="sub" href="#"><svg><use href="#doc"/></svg>Documents</a>
          <a class="sub" href="#"><svg><use href="#down"/></svg>Downloads</a>
          <a class="sub" href="#"><svg><use href="#note"/></svg>Music</a>
          <a class="sub" href="#"><svg><use href="#pic"/></svg>Pictures</a>
          <a class="sub" href="#"><svg><use href="#film"/></svg>Videos</a>
          <a class="sub cur" href="#"><svg><use href="#diskc"/></svg>Local Disk (C:)</a>
          <a class="sub" href="#"><svg><use href="#disk"/></svg>Local Disk (D:)</a>
          <a class="sub" href="#"><svg><use href="#disk"/></svg>Local Disk (E:)</a>
          <a class="sub" href="#"><svg><use href="#disk"/></svg>Local Disk (F:)</a>
          <a class="root" href="#"><svg><use href="#net"/></svg>Network</a>
        </nav>
        <div class="sbar"><svg class="i8 flip"><use href="#chev"/></svg><i class="thumb"></i><svg class="i8"><use href="#chev"/></svg></div>
        <div class="files">
          <table>
            <colgroup><col class="c1"><col class="c2"><col class="c3"><col class="c4"></colgroup>
            <thead><tr><th>Name<svg class="sort flip"><use href="#chev"/></svg></th><th>Date modified</th><th>Type</th><th>Size</th></tr></thead>
            <tbody>
              <tr><td><svg><use href="#folder"/></svg>uploads</td><td>6/26/2021 1:50 AM</td><td>File folder</td><td></td></tr>
              <tr><td><svg><use href="#code"/></svg>Account.php</td><td>4/3/2021 5:03 AM</td><td>PHP File</td><td>1 KB</td></tr>
              <tr><td><svg><use href="#code"/></svg>CHANGE PASSWORD.php</td><td>4/3/2021 5:03 AM</td><td>PHP File</td><td>3 KB</td></tr>
              <tr><td><svg><use href="#json"/></svg>data.JSON</td><td>6/26/2021 1:50 AM</td><td>JSON File</td><td>1 KB</td></tr>
              <tr><td><svg><use href="#code"/></svg>EDIT PROFILE.php</td><td>4/3/2021 5:03 AM</td><td>PHP File</td><td>3 KB</td></tr>
              <tr><td><svg><use href="#code"/></svg>footer.php</td><td>4/3/2021 5:03 AM</td><td>PHP File</td><td>1 KB</td></tr>
              <tr><td><svg><use href="#code"/></svg>header.php</td><td>4/3/2021 5:03 AM</td><td>PHP File</td><td>1 KB</td></tr>
              <tr><td><svg><use href="#code"/></svg>LOGGED IN DASHBOARD.php</td><td>4/3/2021 5:03 AM</td><td>PHP File</td><td>1 KB</td></tr>
              <tr><td><svg><use href="#code"/></svg>LOGIN.php</td><td>4/3/2021 5:03 AM</td><td>PHP File</td><td>2 KB</td></tr>
              <tr><td><svg><use href="#png"/></svg>logo.PNG</td><td>4/3/2021 5:03 AM</td><td>PNG File</td><td>21 KB</td></tr>
              <tr><td><svg><use href="#code"/></svg>logout.php</td><td>4/3/2021 5:03 AM</td><td>PHP File</td><td>1 KB</td></tr>
              <tr><td><svg><use href="#code"/></svg>PROFILE PICTURE.php</td><td>4/3/2021 5:03 AM</td><td>PHP File</td><td>2 KB</td></tr>
              <tr class="picked"><td><svg><use href="#code"/></svg>PUBLIC HOME.php</td><td>4/3/2021 5:03 AM</td><td>PHP File</td><td>1 KB</td></tr>
              <tr><td><svg><use href="#code"/></svg>REGISTRATION.php</td><td>4/3/2021 5:03 AM</td><td>PHP File</td><td>7 KB</td></tr>
              <tr><td><svg><use href="#code"/></svg>upload.php</td><td>4/3/2021 5:03 AM</td><td>PHP File</td><td>2 KB</td></tr>
              <tr><td><svg><use href="#code"/></svg>VIEW PROFILE.php</td><td>4/3/2021 5:03 AM</td><td>PHP File</td><td>2 KB</td></tr>
            </tbody>
          </table>
        </div>
      </div>
      <footer class="status">
        <span>16 items</span><i></i><span>1 item selected</span><span class="bytes">245 bytes</span><i></i>
        <div class="views">
          <button class="on" aria-label="Details"><svg viewBox="0 0 18 14"><path fill="#fff" d="M1 0h5v14H1z"/><path stroke="#2b88d8" stroke-width="2" d="M2.500 3h2M2.500 7h2"/><path stroke="#d33" stroke-width="2" d="M2.500 11h2"/><path stroke="#999" stroke-dasharray="4 2" d="M7 2.500h11M7 7h11M7 11.500h11"/></svg></button>
          <button aria-label="Large icons"><svg viewBox="0 0 16 16"><use href="#pic"/></svg></button>
        </div>
      </footer>
    </div>
    <footer class="taskbar left">
      <button class="t48" aria-label="Start"><svg class="i16"><use href="#win"/></svg></button>
      <label class="tsearch"><svg class="i16"><use href="#mag"/></svg><input type="text" aria-label="Type here to search" placeholder="Type here to search"></label>
      <button class="t48" aria-label="Cortana"><svg class="i16"><use href="#ring"/></svg></button>
      <button class="t48" aria-label="Task view"><svg class="i16"><use href="#tview"/></svg></button>
      <div class="pins">
        <button aria-label="Edge"><svg><use href="#edge"/></svg></button>
        <button class="run" aria-label="Chrome"><svg><use href="#chrome"/></svg></button>
        <button aria-label="Settings"><svg class="sm"><use href="#gear"/></svg></button>
        <button class="run active" aria-label="File Explorer"><svg><use href="#explorer"/></svg></button>
        <button aria-label="Your Phone"><svg><use href="#phone"/></svg></button>
        <button class="run" aria-label="Notepad"><svg><use href="#notepad"/></svg></button>
        <button class="run" aria-label="Teams"><svg><use href="#teams"/></svg></button>
        <button class="run" aria-label="Foxit"><svg><use href="#foxit"/></svg></button>
        <button class="run" aria-label="XAMPP"><svg><use href="#xampp"/></svg></button>
        <button class="run" aria-label="Visual Studio"><svg><use href="#vs"/></svg></button>
        <button class="run" aria-label="Movies"><svg><use href="#movies"/></svg></button>
        <button class="run" aria-label="VS Code"><svg><use href="#code"/></svg></button>
      </div>
      <div class="tray">
        <button class="weather"><svg><use href="#rain"/></svg>31°C</button>
        <button aria-label="Hidden icons"><svg class="i12 flip"><use href="#chev"/></svg></button>
        <button class="dbx" aria-label="Dropbox"><svg class="i16"><use href="#dbox"/></svg><b>1</b></button>
        <button aria-label="OneDrive"><svg class="i16"><use href="#cloud"/></svg></button>
        <button aria-label="Network"><svg class="i14"><use href="#wifi"/></svg></button>
        <button aria-label="Battery"><svg class="i16"><use href="#batt"/></svg></button>
        <button aria-label="Volume"><svg class="i16"><use href="#sound"/></svg></button>
        <button class="lang">ENG</button>
        <button class="clock">7:24 PM<br>6/26/2021</button>
        <button class="t48" aria-label="Notifications"><svg class="bell"><use href="#notif"/></svg></button>
        <i class="peek"></i>
      </div>
    </footer>
  </section>

  <section class="browser">
    <div class="app light">
      <header class="strip">
        <div class="wide">
          <button aria-label="Forms"><svg><use href="#forms"/></svg></button><button aria-label="Translate"><svg><use href="#trans"/></svg></button><button aria-label="Google"><svg><use href="#goog"/></svg></button><button aria-label="Bangla"><svg><use href="#bangla"/></svg></button><button aria-label="Google"><svg><use href="#goog"/></svg></button><button aria-label="Academy"><svg><use href="#cap"/></svg></button><button aria-label="Flower"><svg><use href="#flower"/></svg></button><button aria-label="Site"><svg><use href="#globe"/></svg></button><button aria-label="Google"><svg><use href="#goog"/></svg></button><button aria-label="W3"><svg><use href="#w3"/></svg></button><button aria-label="YouTube"><svg><use href="#yt"/></svg></button><button aria-label="Google"><svg><use href="#goog"/></svg></button><button aria-label="Google"><svg><use href="#goog"/></svg></button><button aria-label="W3"><svg><use href="#w3"/></svg></button><button aria-label="W3"><svg><use href="#w3g"/></svg></button><button aria-label="W3"><svg><use href="#w3g"/></svg></button><button aria-label="W3"><svg><use href="#w3g"/></svg></button><button aria-label="W3"><svg><use href="#w3g"/></svg></button>
        </div>
        <div class="slim">
          <button aria-label="W3"><svg><use href="#w3"/></svg></button><button aria-label="W3"><svg><use href="#w3g"/></svg></button><button aria-label="W3"><svg><use href="#w3"/></svg></button><button aria-label="Bangla"><svg><use href="#bangla"/></svg></button><button aria-label="Forms"><svg><use href="#forms"/></svg></button><button aria-label="Google"><svg><use href="#goog"/></svg></button><button aria-label="W3"><svg><use href="#w3"/></svg></button><button aria-label="W3"><svg><use href="#w3"/></svg></button><button aria-label="Google"><svg><use href="#goog"/></svg></button><button aria-label="Udemy"><svg><use href="#udemy"/></svg></button><button aria-label="Site"><svg><use href="#globe"/></svg></button><button aria-label="Excel"><svg><use href="#excel"/></svg></button><button aria-label="GitHub"><svg><use href="#github"/></svg></button><button aria-label="Google"><svg><use href="#goog"/></svg></button><button aria-label="Geeks"><svg><use href="#gfg"/></svg></button><button aria-label="Geeks"><svg><use href="#gfg"/></svg></button><button aria-label="Geeks"><svg><use href="#gfg"/></svg></button>
        </div>
        <button class="cur" aria-label="Close tab"><svg viewBox="0 0 10 10"><path stroke="#222" stroke-width="1.800" d="m1 1 8 8M9 1 1 9"/></svg></button>
        <button class="plus" aria-label="New tab"><svg viewBox="0 0 12 12"><path stroke="#5a4a1e" stroke-width="2" d="M6 0v12M0 6h12"/></svg></button>
        <div class="winbtns gold">
          <button class="dd" aria-label="Search tabs"><svg viewBox="0 0 14 14"><circle cx="7" cy="7" r="7" fill="#5a4a1e"/><path fill="#ffdd5c" d="M4 5.500h6L7 9.500z"/></svg></button>
          <button aria-label="Minimize"><svg><use href="#min"/></svg></button>
          <button aria-label="Restore"><svg><use href="#restore"/></svg></button>
          <button aria-label="Close"><svg><use href="#close"/></svg></button>
        </div>
      </header>
      <div class="omni">
        <button aria-label="Back"><svg class="i14"><use href="#arrow"/></svg></button>
        <button class="dim" aria-label="Forward"><svg class="i14 mirror"><use href="#arrow"/></svg></button>
        <button aria-label="Reload"><svg class="i16"><use href="#reload"/></svg></button>
        <button aria-label="Home"><svg class="i16"><use href="#home"/></svg></button>
        <div class="url"><svg class="i16"><use href="#info"/></svg><p><b>localhost</b>/Labtask4/PUBLIC%20HOME.php</p><svg class="i16"><use href="#zoomin"/></svg><svg class="i16"><use href="#fav"/></svg></div>
        <div class="ext">
          <button aria-label="Translate"><svg class="i16"><use href="#trans"/></svg></button>
          <button aria-label="Grammarly"><svg class="i16"><use href="#gram"/></svg></button>
          <button aria-label="IDM"><svg class="i16"><use href="#idm"/></svg></button>
          <button aria-label="Extensions"><svg class="i16"><use href="#puzzle"/></svg></button>
          <button aria-label="Profile"><svg class="i22"><use href="#face"/></svg></button>
          <button aria-label="Menu"><svg class="i16" viewBox="0 0 16 16"><path fill="#222" d="M6.500 1.500h3v3h-3zM6.500 6.500h3v3h-3zM6.500 11.500h3v3h-3z"/></svg></button>
        </div>
      </div>
      <nav class="marks">
        <div class="list">
          <a href="#"><svg><use href="#apps"/></svg>Apps</a>
          <a href="#"><svg><use href="#folderl"/></svg>Coding ground.</a>
          <a href="#"><svg><use href="#folderl"/></svg>New folder</a>
          <a href="#"><svg><use href="#bbc"/></svg>Resident Evil: Vende...</a>
          <a href="#"><svg><use href="#gmail"/></svg>Gmail</a>
          <a href="#"><svg><use href="#yt"/></svg>YouTube</a>
          <a href="#"><svg><use href="#maps"/></svg>Maps</a>
          <a href="#"><svg><use href="#oracle"/></svg>Oracle 11g Ex</a>
          <a href="#"><svg><use href="#gold"/></svg>AutoCAD 2007 Free...</a>
        </div>
        <div class="more">
          <button aria-label="More bookmarks"><svg viewBox="0 0 10 8"><path fill="none" stroke="#222" stroke-width="1.600" d="m1 .8 3 3.200-3 3.200M5.500.8l3 3.200-3 3.200"/></svg></button>
          <a class="o" href="#"><svg><use href="#folderl"/></svg>Other bookmarks</a>
          <a class="r" href="#"><svg><use href="#read"/></svg>Reading list</a>
        </div>
      </nav>
      <article class="site">
        <header>
          <a class="logo" href="#"><svg viewBox="0 0 97 83"><path fill="#25b14c" d="M1 0h43l53 83H53zM84 0h7L64 34l-4-5zM28 44l5 6L7 83H0z"/></svg><span>Company</span></a>
          <nav><a href="#">Home</a> | <a href="#">Login</a> | <a href="#">Registration</a></nav>
        </header>
        <hr>
        <h3>Welcome to xCompany</h3>
        <hr>
        <p>Copyright © 2017</p>
      </article>
    </div>
    <footer class="taskbar right">
      <button class="t48" aria-label="Start"><svg class="i16"><use href="#win"/></svg></button>
      <button class="t48" aria-label="Search"><svg class="i16"><use href="#mag"/></svg></button>
      <button class="t48" aria-label="Cortana"><svg class="i16"><use href="#ring"/></svg></button>
      <button class="t48" aria-label="Task view"><svg class="i16"><use href="#tview"/></svg></button>
      <div class="pins">
        <button aria-label="Edge"><svg><use href="#edge"/></svg></button>
        <button class="run" aria-label="Chrome"><svg><use href="#chrome"/></svg></button>
        <button aria-label="Settings"><svg class="sm"><use href="#gear"/></svg></button>
        <button class="run active" aria-label="File Explorer"><svg><use href="#explorer"/></svg></button>
        <button aria-label="Your Phone"><svg><use href="#phone"/></svg></button>
        <button class="run" aria-label="Notepad"><svg><use href="#notepad"/></svg></button>
        <button class="run" aria-label="Teams"><svg><use href="#teams"/></svg></button>
        <button class="run" aria-label="Foxit"><svg><use href="#foxit"/></svg></button>
        <button class="run" aria-label="XAMPP"><svg><use href="#xampp"/></svg></button>
        <button class="run" aria-label="Visual Studio"><svg><use href="#vs"/></svg></button>
        <button class="run" aria-label="Movies"><svg><use href="#movies"/></svg></button>
        <button class="run" aria-label="VS Code"><svg><use href="#code"/></svg></button>
      </div>
      <div class="tray"><button class="clock end">7:24 PM<br>6/26/2021</button></div>
    </footer>
  </section>
</main>
</body>
</html>
```
FILE: styles.css
```css
* { box-sizing: border-box; }
body { margin: 0; font: 11px/16px "Open Sans", "Noto Sans", sans-serif; color: #fff; background: #fff; }
button { margin: 0; padding: 0; border: 0; background: none; color: inherit; font: inherit; display: flex; align-items: center; justify-content: center; }
a { color: inherit; text-decoration: none; }
p, h1, h3 { margin: 0; }
input { border: 0; padding: 0; background: none; color: inherit; font: inherit; min-width: 0; flex: 1; outline: 0; }
svg { flex: none; display: block; overflow: visible; }
.sprite { position: absolute; width: 0; height: 0; }
.i8 { width: 8px; height: 8px; }
.i12 { width: 12px; height: 12px; }
.i14 { width: 14px; height: 14px; }
.i16 { width: 16px; height: 16px; }
.i22 { width: 22px; height: 22px; }
.flip { transform: rotate(180deg); }
.mirror { transform: scaleX(-1); }
.turn { transform: rotate(90deg); }
.dim { color: #8a8a8a; }

.screen { display: grid; grid-template-columns: 1fr 1fr; min-height: 100vh; }
.screen > section { display: flex; flex-direction: column; min-width: 0; }
.app { flex: 1; display: flex; flex-direction: column; min-height: 0; }
.dark { background: #191919; }

/* Explorer title and tabs */
.titlebar { height: 23px; background: #000; display: flex; align-items: center; }
.titlebar > .i16:nth-of-type(2) { margin: 0 6px 0 9px; }
.qsep { width: 3px; height: 13px; border: 1px solid #4c4c4c; margin-left: 6px; }
.titlebar .qmore { width: 7px; height: 6px; border-top: 1px solid #fff; margin-left: 7px; display: flex; align-items: flex-end; }
.qmore::after { content: ""; border: 3px solid transparent; border-top-color: #fff; border-bottom: 0; }
.titlebar h1 { font-size: 11px; font-weight: 400; margin-left: 6px; }
.winbtns { margin-left: auto; display: flex; align-self: flex-start; }
.winbtns button { width: 46px; height: 20px; }
.winbtns svg { width: 10px; height: 10px; }
.tabs { height: 23px; background: #000; display: flex; }
.tabs > button { width: 58px; }
.tabs .file { width: 56px; background: #0063b1; }
.tabs .on { background: #202020; border: 1px solid #2d2d2d; border-bottom: 0; }
.tabend { margin-left: auto; display: flex; align-items: center; gap: 8px; padding-right: 3px; }
.help { width: 16px; height: 16px; border-radius: 50%; background: #0a6fd0; font-weight: 700; }

/* Ribbon */
.ribbon { height: 93px; background: #202020; border-top: 1px solid #2d2d2d; border-bottom: 1px solid #2d2d2d; display: flex; padding-top: 3px; }
.group { height: 85px; border-right: 1px solid #3c3c3c; display: flex; flex-direction: column; }
.group p { text-align: center; color: #a8a8a8; }
.tools { display: flex; height: 72px; }
.clip { width: 263px; }
.clip .tools { padding-left: 6px; }
.org { width: 191px; }
.org .tools, .new .tools { padding-left: 3px; }
.new { width: 145px; }
.open { width: 133px; }
.open .tools { padding-left: 4px; }
.sel { width: 115px; }
.sel .small { padding-left: 7px; }
.big { display: block; text-align: center; line-height: 13px; padding-top: 5px; align-self: flex-start; white-space: nowrap; }
.big svg { width: 28px; height: 28px; margin: 0 auto 6px; }
.big .pinbig { width: 20px; height: 20px; margin: 5px auto 9px; color: #7a7a7a; }
.off { color: #a2a2a2; }
.w42 { width: 42px; } .w46 { width: 46px; } .w56 { width: 56px; } .w66 { width: 66px; }
.small { padding-left: 4px; }
.small button { height: 22px; gap: 3px; white-space: nowrap; }
.small svg { width: 16px; height: 16px; }
.vline { width: 1px; height: 56px; margin: 6px 0 0 5px; background: #4b4b4b; }
.tri { display: inline-block; border: 3px solid transparent; border-top-color: #d8d8d8; border-bottom: 0; vertical-align: 2px; margin-left: 1px; }

/* Address bar */
.addr { height: 42px; display: flex; align-items: center; padding: 0 12px 1px 0; color: #f0f0f0; }
.navbtns { display: flex; width: 106px; padding-left: 4px; }
.navbtns button { width: 30px; }
.navbtns .narrow { width: 19px; }
.navbtns .dim { color: #7c7c7c; }
.crumbs { flex: 1; height: 30px; border: 1px solid #535353; display: flex; align-items: center; padding-left: 2px; }
.gt { width: 5px; height: 5px; border: solid #a5a5a5; border-width: 1px 1px 0 0; transform: rotate(45deg); margin: 0 10px 0 7px; }
.crumbs a + .gt { margin-left: 10px; }
.crumbend { margin-left: auto; display: flex; gap: 18px; color: #999; padding-right: 9px; }
.find { width: 202px; height: 30px; border: 1px solid #535353; margin-left: 12px; display: flex; align-items: center; padding-left: 14px; gap: 12px; color: #8d8d8d; }
.find input::placeholder { color: #7d7d7d; opacity: 1; }

/* Folder tree */
.body { flex: 1; display: flex; min-height: 0; }
.tree { width: 140px; padding-top: 16px; height: 524px; overflow: hidden; }
.tree a { height: 24px; display: flex; align-items: center; gap: 5px; padding-left: 24px; white-space: nowrap; }
.tree .root { margin-top: 8px; }
.tree .sub { padding-left: 32px; }
.tree .cur { background: #333; background-clip: content-box; padding-left: 1px; margin-right: 2px; }
.tree .cur svg { margin-left: 31px; }
.tree svg { width: 16px; height: 16px; }
.tree .pinned { width: 10px; height: 10px; margin: 0 4px 0 auto; color: #8fa0ac; }
.sbar { width: 18px; border-right: 3px solid #232323; background: #171717; color: #8a8a8a; display: flex; flex-direction: column; align-items: center; justify-content: space-between; padding: 5px 0; }
.thumb { width: 15px; flex: 1; margin: 4px 0 12px; background: #4d4d4d; }

/* File table */
.files { flex: 1; background: #202020; padding-left: 16px; }
table { width: 601px; table-layout: fixed; border-spacing: 0; }
.c1 { width: 258px; } .c2 { width: 144px; } .c3 { width: 120px; } .c4 { width: 79px; }
th { position: relative; height: 25px; padding: 0 0 0 6px; border-right: 1px solid #626262; text-align: left; font-weight: 400; color: #dedede; }
th:first-child { padding-left: 3px; }
.sort { position: absolute; left: 123px; top: 0; width: 8px; height: 8px; color: #a0a0a0; }
tbody::before { content: ""; display: block; height: 6px; }
td { height: 21px; padding: 0 0 0 6px; color: #dedede; white-space: nowrap; }
td:first-child { color: #fff; padding-left: 24px; position: relative; }
td svg { position: absolute; left: 4px; top: 2px; width: 16px; height: 16px; }
td:last-child { text-align: right; padding: 0 3px 0 0; border-right: 4px solid transparent; background-clip: padding-box; }
.picked td { background-color: #777; }

.status { height: 23px; background: #333; display: flex; align-items: center; padding-left: 14px; color: #d8d8d8; }
.status i { width: 1px; height: 11px; background: #fff; margin: 0 11px 0 10px; }
.bytes { margin-left: 6px; }
.views { margin-left: auto; display: flex; gap: 4px; padding-right: 8px; }
.views button { width: 22px; height: 23px; }
.views .on { background: #686868; border: 1px solid #8c8c8c; }
.views svg { width: 16px; height: 14px; }
.views button + button { width: 14px; }

/* Taskbars */
.taskbar { height: 40px; display: flex; }
.left { background: linear-gradient(90deg, #3a3431, #393534 45%, #343637 62%, #2c2a20 72%, #2b281f 85%, #3a3634 90%, #2f3437 94%, #393532); }
.right { background: linear-gradient(90deg, #3a3431, #393635 50%, #2c2b22 75%, #2f3437); }
.t48 { width: 48px; }
.tsearch { width: 344px; background: #333; border: 1px solid #5f5f5f; display: flex; align-items: center; padding-left: 11px; gap: 12px; font-size: 14px; color: #f0f0f0; }
.tsearch input::placeholder { color: #c6c6c6; opacity: 1; }
.pins { display: flex; margin-left: 2px; }
.pins button { width: 40px; position: relative; }
.pins svg { width: 24px; height: 24px; }
.pins .sm { width: 19px; height: 19px; }
.run::after { content: ""; position: absolute; left: 4px; right: 4px; bottom: 0; height: 2px; background: #76b9ed; }
.active { background: #666361; }
.active::after { left: 0; right: 0; }
.right .pins { margin-left: 3px; gap: 1px; }
.right .pins button { width: 48px; }
.tray { margin-left: auto; display: flex; }
.tray > button { width: 24px; }
.tray .weather { width: 80px; gap: 9px; padding-right: 12px; font-size: 13px; color: #ccc; }
.weather svg { width: 20px; height: 16px; }
.dbx { position: relative; }
.dbx b { position: absolute; left: 4px; top: 18px; width: 9px; height: 9px; background: #d0162b; font-size: 8px; line-height: 9px; }
.tray .lang { width: 36px; }
.tray .clock { width: 62px; display: block; text-align: center; line-height: 18px; padding-bottom: 1px; }
.tray .t48 { width: 48px; }
.bell { width: 25px; height: 25px; margin-top: 4px; }
.peek { width: 6px; border-left: 1px solid #888; }
.tray .end { width: 66px; }

/* Browser */
.light { background: #fff; color: #222; }
.strip { height: 34px; background: #ffdd5c; display: flex; padding-left: 9px; }
.wide, .slim { display: flex; align-items: center; }
.wide button, .slim button { width: 31px; height: 20px; border-right: 1px solid #a08a3e; }
.slim button { width: 30px; }
.slim button:last-child { width: 28px; border: 0; }
.strip svg { width: 16px; height: 16px; }
.strip .cur { width: 32px; background: #fff; border-radius: 8px 8px 0 0; }
.strip .cur svg { width: 9px; height: 9px; }
.plus { width: 44px; }
.strip .plus svg { width: 12px; height: 12px; }
.strip .winbtns { color: #7d6b2c; }
.strip .winbtns button { height: 28px; }
.strip .winbtns svg { width: 10px; height: 10px; }
.strip .winbtns .dd { width: 42px; height: 34px; }
.strip .winbtns .dd svg { width: 14px; height: 14px; }
.omni { height: 36px; display: flex; align-items: center; padding: 0 6px; }
.omni > button { width: 32px; height: 32px; }
.url { flex: 1; height: 28px; border-radius: 14px; background: #e1e1e1; margin-left: 6px; display: flex; align-items: center; gap: 16px; padding: 0 10px; font-size: 13px; }
.url p { flex: 1; margin-left: -8px; color: #5c5c5c; }
.url b { font-weight: 400; color: #222; }
.ext { display: flex; padding-left: 6px; }
.ext button { width: 32px; height: 32px; }
.marks { height: 33px; border-bottom: 1px solid #b0b0b0; display: flex; justify-content: space-between; align-items: center; padding: 0 12px 4px 14px; }
.list { display: grid; grid-template-columns: 67px 124px 98px 155px 70px 86px 70px 113px auto; }
.marks a { display: flex; align-items: center; gap: 8px; white-space: nowrap; }
.marks svg { width: 16px; height: 16px; }
.more { display: flex; align-items: center; }
.more button svg { width: 9px; height: 7px; }
.more a { height: 16px; border-left: 1px solid #b0b0b0; padding-left: 11px; }
.more .o { width: 138px; margin-left: 10px; }
.more .r { width: 99px; }
.more .r svg { width: 14px; height: 14px; }

/* Page */
.site { padding: 0 10px; font: 20px/22px "Liberation Serif", serif; color: #000; }
.site header { display: flex; justify-content: space-between; height: 168px; }
.logo { display: flex; padding: 39px 0 0 29px; font: 700 51px/60px "DejaVu Sans Mono", monospace; }
.logo svg { width: 97px; height: 83px; }
.logo span { padding-top: 11px; margin-left: -8px; }
.site nav { padding: 24px 12px 0 0; color: #555; }
.site nav a { color: #551a8b; text-decoration: underline; }
.site hr { margin: 0; border: 1px solid; border-color: #9a9a9a #eee #eee #9a9a9a; }
.site h3 { font-size: 23px; line-height: 26px; padding: 47px 13px 129px; }
.site p { text-align: center; padding-top: 31px; }
```
